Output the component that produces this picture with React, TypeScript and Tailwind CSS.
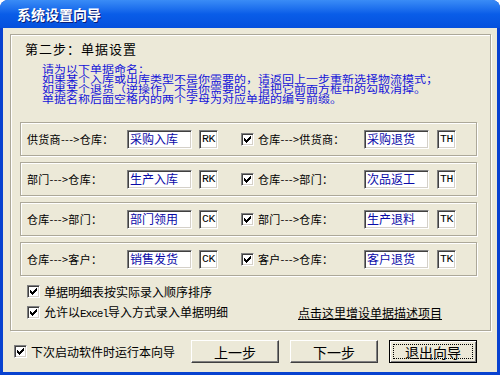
import React from "react";

const CJK = "font-['SimSun','Noto_Sans_CJK_SC',sans-serif]";

function CheckMark() {
  const cols: [number, number][] = [
    [1, 3],
    [2, 4],
    [3, 5],
    [4, 4],
    [5, 3],
    [6, 2],
    [7, 1],
  ];
  const d = cols.map(([x, y]) => `M${x} ${y}h1v3h-1z`).join("");
  return (
    <svg width="9" height="9" viewBox="0 0 9 9" shapeRendering="crispEdges">
      <path d={d} fill="#000" />
    </svg>
  );
}

function Check() {
  return (
    <span className="w-[13px] h-[13px] shrink-0 bg-white border border-t-[#808080] border-l-[#808080] border-b-white border-r-white shadow-[inset_1px_1px_0_#404040,inset_-1px_-1px_0_#d4d0c8] flex items-center justify-center">
      <CheckMark />
    </span>
  );
}

function NameBox({ text }: { text: string }) {
  return (
    <div className="w-[65px] h-[19px] shrink-0 bg-white border border-t-[#808080] border-l-[#808080] border-b-white border-r-white shadow-[inset_1px_1px_0_#404040,inset_-1px_-1px_0_#d4d0c8] flex items-center pl-[2px] text-[12px] leading-[14px] text-[#0a0aa8] whitespace-nowrap">
      {text}
    </div>
  );
}

function CodeBox({ text }: { text: string }) {
  return (
    <div className="w-[19px] h-[19px] shrink-0 bg-white border border-t-[#808080] border-l-[#808080] border-b-white border-r-white shadow-[inset_1px_1px_0_#404040,inset_-1px_-1px_0_#d4d0c8] flex items-center pl-[2px] text-[11.5px] leading-[14px] tracking-[-0.5px] text-black font-['Liberation_Mono',monospace]">
      {text}
    </div>
  );
}

function Row(props: {
  l: string;
  ln: string;
  lc: string;
  r: string;
  rn: string;
  rc: string;
}) {
  return (
    <div className="h-[34px] w-[457px] border border-[#aca899] shadow-[inset_1px_1px_0_#fff,1px_1px_0_#fff] flex items-center">
      <div className="w-[106px] pl-[6px] text-[11px] tracking-[0.3px] text-black whitespace-nowrap">
        {props.l}
      </div>
      <NameBox text={props.ln} />
      <div className="w-[7px]" />
      <CodeBox text={props.lc} />
      <div className="w-[23px]" />
      <Check />
      <div className="w-[110px] pl-[4px] text-[11px] tracking-[0.3px] text-black whitespace-nowrap">
        {props.r}
      </div>
      <NameBox text={props.rn} />
      <div className="w-[8px]" />
      <CodeBox text={props.rc} />
    </div>
  );
}

function Btn({ text, def }: { text: string; def?: boolean }) {
  return (
    <div
      className={
        "w-[88px] h-[23px] bg-[#ECE9D8] flex items-center justify-center text-[14px] leading-[16px] text-black " +
        (def
          ? "border border-black shadow-[inset_1px_1px_0_#fff,inset_-1px_-1px_0_#808080]"
          : "border border-t-white border-l-white border-b-[#404040] border-r-[#404040] shadow-[inset_-1px_-1px_0_#808080]")
      }
    >
      {def ? (
        <div className="w-[80px] h-[15px] border border-dotted border-black flex items-center justify-center">
          {text}
        </div>
      ) : (
        text
      )}
    </div>
  );
}

function BlueLine({ children }: { children: React.ReactNode }) {
  return (
    <div className="h-[10px] flex items-center">
      <span className="block text-[12px] leading-[12px] scale-y-[0.82] origin-center">
        {children}
      </span>
    </div>
  );
}

export default function App() {
  return (
    <div
      className={
        "w-[500px] h-[375px] bg-[#0842d0] flex flex-col rounded-t-[8px] overflow-hidden " +
        CJK
      }
    >
      <div className="h-[28px] shrink-0 bg-gradient-to-b from-[#3a8cf6] via-[#0a5de8] to-[#0550dd] flex items-center pl-[17px]">
        <span className="text-white font-bold text-[14px] [text-shadow:1px_1px_0_#0a1e78]">
          系统设置向导
        </span>
      </div>
      <div className="flex-1 mx-[3px] mb-[3px] bg-[#ECE9D8] flex flex-col">
        <div className="ml-[7px] mt-[6px] w-[481px] h-[297px] border border-[#aca899] shadow-[inset_1px_1px_0_#fff,1px_1px_0_#fff] flex flex-col">
          <div className="pl-[14px] pt-[6px] text-[13px] tracking-[1px] leading-[16px] text-black">
            第二步：单据设置
          </div>
          <div className="pl-[31px] mt-[7px] text-[#1414d8] whitespace-nowrap flex flex-col">
            <BlueLine>请为以下单据命名：</BlueLine>
            <BlueLine>如果某个入库或出库类型不是你需要的，请返回上一步重新选择物流模式；</BlueLine>
            <BlueLine>如果某个退货（逆操作）不是你需要的，请把它前面方框中的勾取消掉。</BlueLine>
            <BlueLine>单据名称后面空格内的两个字母为对应单据的编号前缀。</BlueLine>
          </div>
          <div className="ml-[9px] mt-[18px] flex flex-col gap-[6px]">
            <Row l="供货商--->仓库：" ln="采购入库" lc="RK" r="仓库--->供货商：" rn="采购退货" rc="TH" />
            <Row l="部门--->仓库：" ln="生产入库" lc="RK" r="仓库--->部门：" rn="次品返工" rc="TH" />
            <Row l="仓库--->部门：" ln="部门领用" lc="CK" r="部门--->仓库：" rn="生产退料" rc="TK" />
            <Row l="仓库--->客户：" ln="销售发货" lc="CK" r="客户--->仓库：" rn="客户退货" rc="TK" />
          </div>
          <div className="ml-[16px] mt-[9px] flex items-center gap-[4px] h-[13px] text-[12px] text-black">
            <Check />
            <span>单据明细表按实际录入顺序排序</span>
          </div>
          <div className="ml-[16px] mt-[8px] flex items-center h-[13px] text-[12px] text-black">
            <div className="w-[271px] flex items-center">
              <Check />
              <span className="ml-[4px] whitespace-nowrap">
                允许以<span className="font-['Liberation_Mono',monospace] text-[11px] tracking-[-1px]">Excel</span>导入方式录入单据明细
              </span>
            </div>
            <span className="underline whitespace-nowrap">点击这里增设单据描述项目</span>
          </div>
        </div>
        <div className="mt-[9px] flex items-center h-[23px]">
          <div className="ml-[11px] flex items-center gap-[4px] text-[12px] text-black">
            <Check />
            <span>下次启动软件时运行本向导</span>
          </div>
          <div className="ml-auto mr-[20px] flex gap-[11px]">
            <Btn text="上一步" />
            <Btn text="下一步" />
            <Btn text="退出向导" def />
          </div>
        </div>
      </div>
    </div>
  );
}
